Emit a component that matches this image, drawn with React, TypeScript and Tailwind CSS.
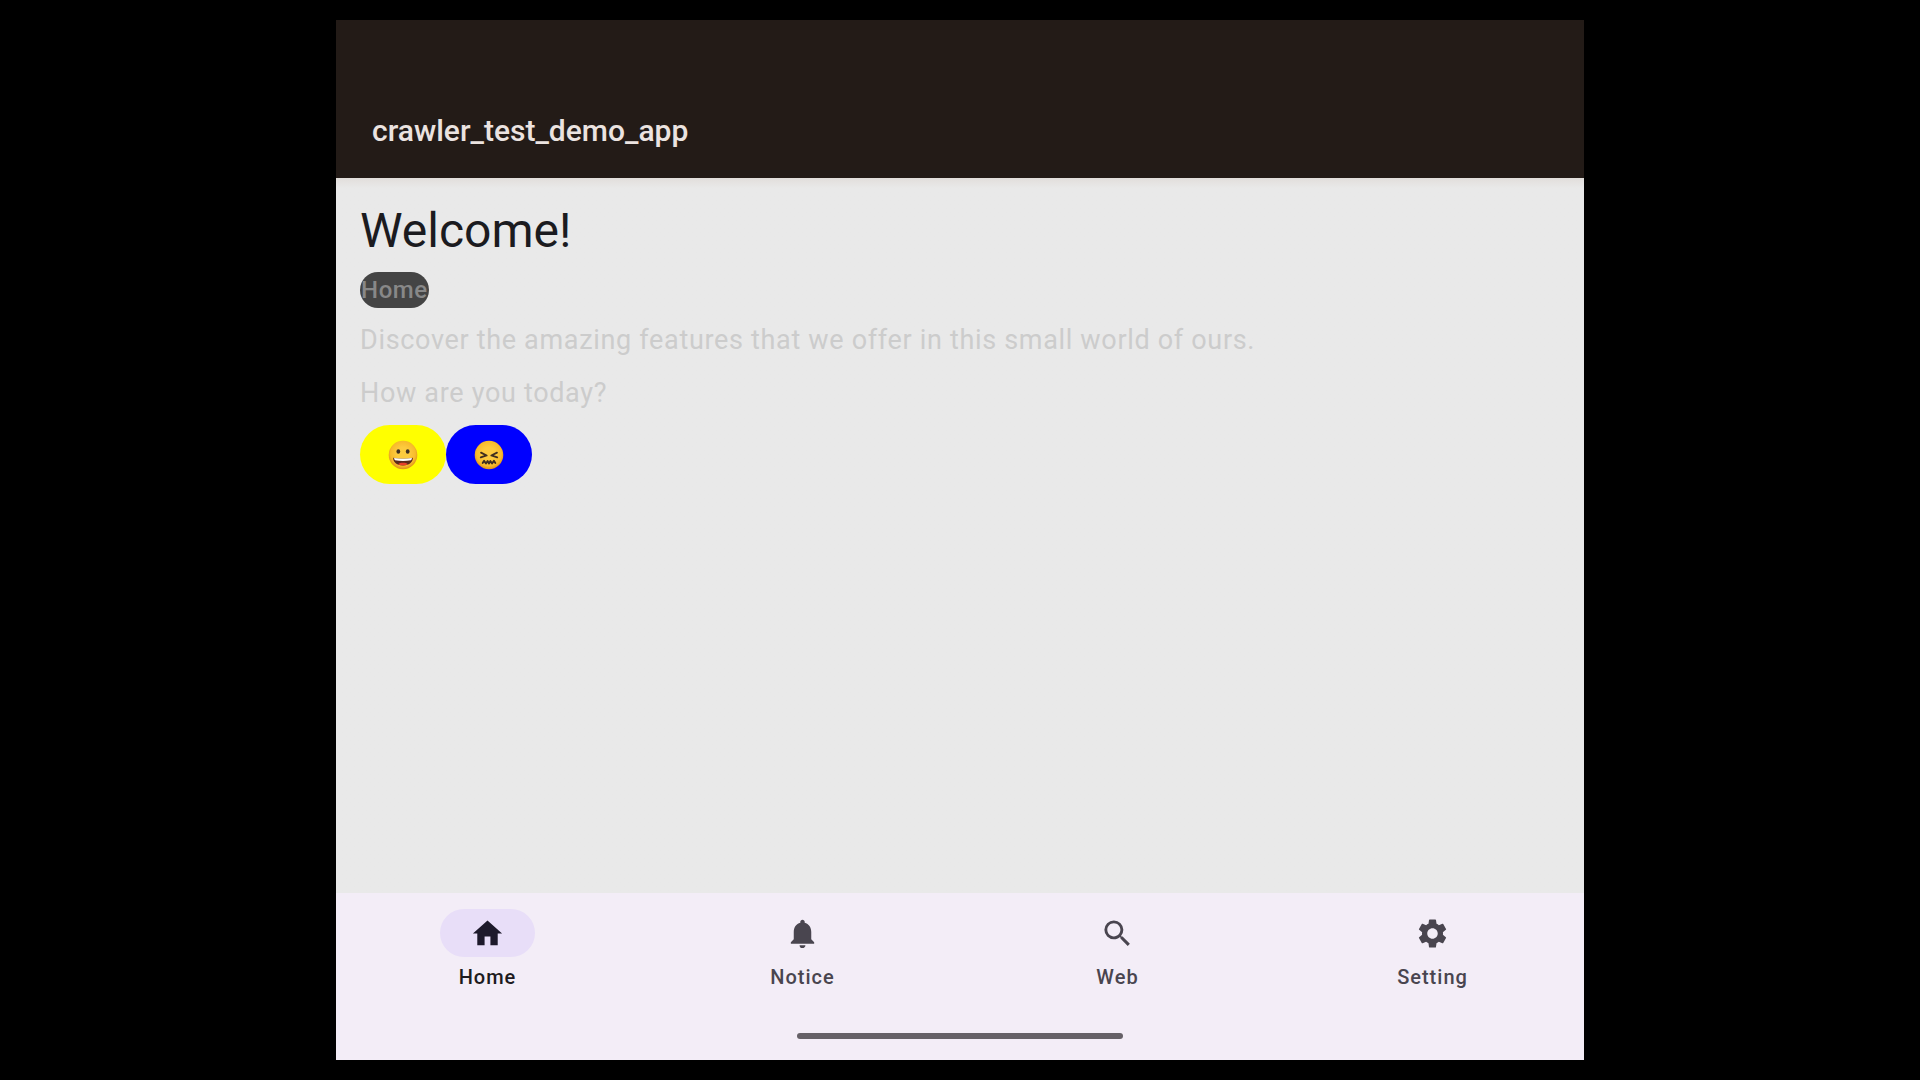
import { clsx } from "clsx"
import { useState } from "react"
import { MdHome, MdNotifications, MdSearch, MdSettings } from "react-icons/md"

const tabs = [
  { name: "Home", icon: MdHome },
  { name: "Notice", icon: MdNotifications },
  { name: "Web", icon: MdSearch },
  { name: "Setting", icon: MdSettings },
]

function FaceBase({ id }: { id: string }) {
  return (
    <>
      <defs>
        <radialGradient id={id} cx="50%" cy="45%" r="54%">
          <stop offset="0.4" stopColor="#fdcb3e" />
          <stop offset="0.8" stopColor="#f8bb2c" />
          <stop offset="1" stopColor="#e0921c" />
        </radialGradient>
      </defs>
      <circle cx="64" cy="64" r="61" fill={`url(#${id})`} />
    </>
  )
}

function GrinningFace() {
  return (
    <svg viewBox="0 0 128 128" className="size-[30px]" aria-hidden="true">
      <FaceBase id="grin" />
      <ellipse cx="44" cy="49" rx="8" ry="10" fill="#402f20" />
      <ellipse cx="84" cy="49" rx="8" ry="10" fill="#402f20" />
      <path d="M22 76q42 8 84 0c1 18-16 33-42 33S21 94 22 76z" fill="#5a2a1c" />
      <path d="M26 77q38 7 76 0c0 4-1 7-4 9q-34 7-68 0c-3-2-4-5-4-9z" fill="#fff" />
      <path d="M44 103c6-8 34-8 40 0-6 4-12 5-20 5s-14-1-20-5z" fill="#e8402a" />
    </svg>
  )
}

function ConfoundedFace() {
  return (
    <svg viewBox="0 0 128 128" className="size-[30px]" aria-hidden="true">
      <FaceBase id="confounded" />
      <g fill="none" stroke="#402f20" strokeWidth="8" strokeLinecap="round" strokeLinejoin="round">
        <path d="M30 54l24 12-25 8" />
        <path d="M98 54L74 66l25 8" />
        <path d="M37 98l6-9 8 11 7-10 6 10 6-10 7 10 8-11 6 9" />
      </g>
    </svg>
  )
}

export default function App() {
  const [active, setActive] = useState("Home")

  return (
    <div className="flex min-h-screen items-center justify-center bg-black font-[Roboto,sans-serif]">
      <div className="flex aspect-[6/5] w-[65%] flex-col bg-[#e9e9e9]">
        {/* App bar */}
        <header className="bg-[#231b17] px-9 pt-[91px] pb-[27px]">
          <h1 className="text-[30px] leading-10 font-medium text-[#ebe3e0]">crawler_test_demo_app</h1>
        </header>

        <main className="flex flex-1 flex-col items-start bg-linear-to-b from-[#e2dedb] to-[#e9e9e9] to-[10px] px-6 pt-[23px]">
          <h2 className="text-[48px] leading-[60px] text-[#1b1b1f]">Welcome!</h2>
          <button className="mt-[11px] rounded-full bg-[#444444] px-px text-[24px] leading-9 font-medium tracking-wide text-[#888888]">
            Home
          </button>
          <p className="mt-4 text-[27px] leading-8 tracking-wide text-[#cccccc]">
            Discover the amazing features that we offer in this small world of ours.
          </p>
          <p className="mt-[21px] text-[27px] leading-8 tracking-wide text-[#cccccc]">How are you today?</p>
          <div className="mt-4 flex">
            <button
              aria-label="Good"
              className="flex h-[59px] w-[86px] items-center justify-center rounded-full bg-[#ffff00]"
            >
              <GrinningFace />
            </button>
            <button
              aria-label="Bad"
              className="flex h-[59px] w-[86px] items-center justify-center rounded-full bg-[#0000ff]"
            >
              <ConfoundedFace />
            </button>
          </div>
        </main>

        {/* Bottom navigation */}
        <footer className="bg-[#f3edf7] pt-4 pb-[21px]">
          <nav className="flex gap-3">
            {tabs.map((tab) => {
              const isActive = tab.name === active
              const Icon = tab.icon

              return (
                <button
                  key={tab.name}
                  onClick={() => setActive(tab.name)}
                  className={clsx(
                    "flex flex-1 flex-col items-center gap-2",
                    isActive ? "text-[#1d1b20]" : "text-[#49454f]",
                  )}
                >
                  <span
                    className={clsx(
                      "flex h-12 w-[95px] items-center justify-center rounded-full",
                      isActive && "bg-[#e8def8] text-[#1d192b]",
                    )}
                  >
                    <Icon size={35} />
                  </span>
                  <span className="text-[20px] leading-6 font-medium tracking-wider">{tab.name}</span>
                </button>
              )
            })}
          </nav>
          <div className="mx-auto mt-11 h-1.5 w-[326px] rounded-full bg-[#656067]" />
        </footer>
      </div>
    </div>
  )
}
